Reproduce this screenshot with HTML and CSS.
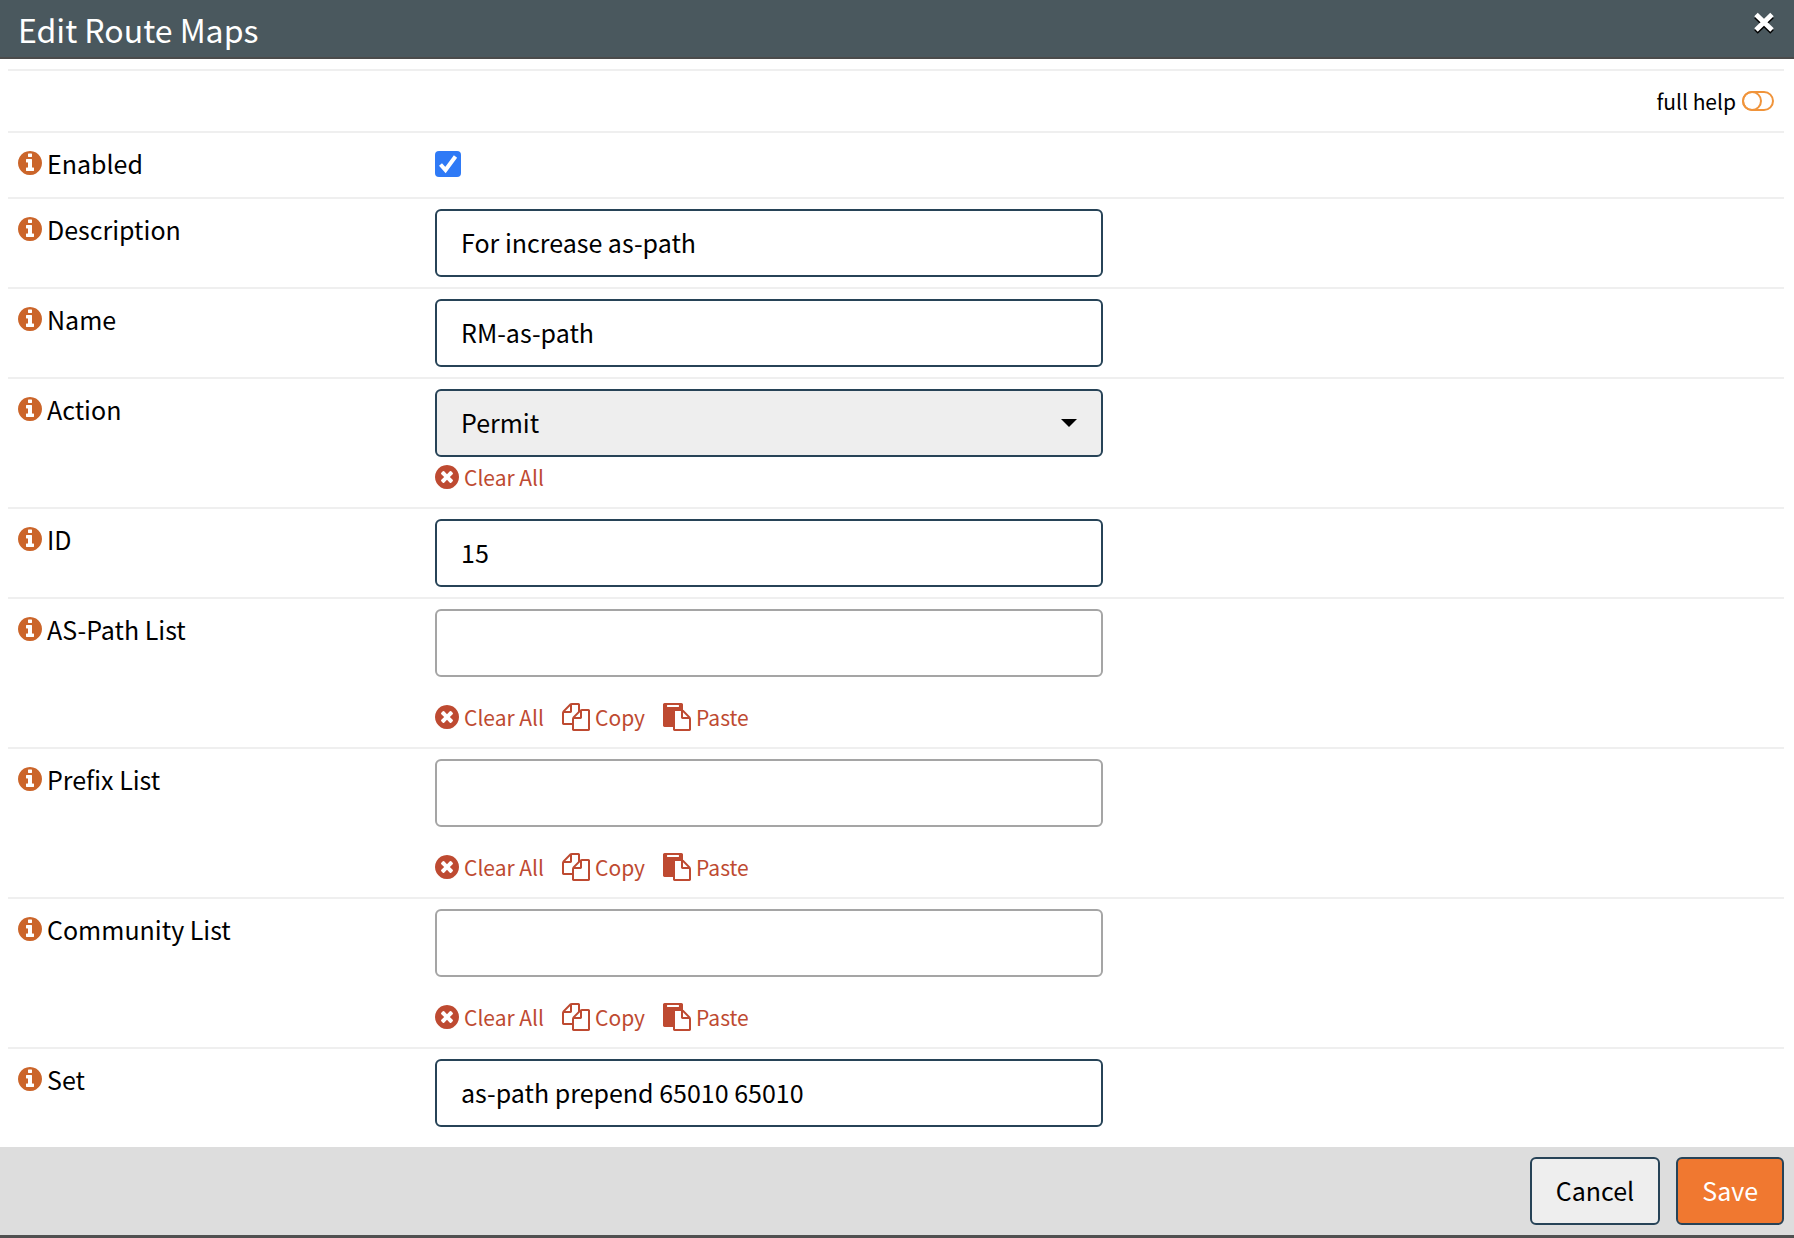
FILE: index.html
```html
<!DOCTYPE html>
<html lang="en">
<head>
<meta charset="utf-8">
<title>Edit Route Maps</title>
<link rel="stylesheet" href="styles.css">
</head>
<body>
<svg class="sprite" aria-hidden="true">
  <symbol id="info" viewBox="128 128 1536 1536"><path d="M1152 1376v-160q0-14-9-23t-23-9h-96v-512q0-14-9-23t-23-9h-320q-14 0-23 9t-9 23v160q0 14 9 23t23 9h96v320h-96q-14 0-23 9t-9 23v160q0 14 9 23t23 9h448q14 0 23-9t9-23zm-128-896v-160q0-14-9-23t-23-9h-192q-14 0-23 9t-9 23v160q0 14 9 23t23 9h192q14 0 23-9t9-23zm640 416q0 209-103 385.5t-279.5 279.5-385.5 103-385.5-103-279.5-279.5-103-385.5 103-385.5 279.5-279.5 385.5-103 385.5 103 279.5 279.5 103 385.5z"/></symbol>
  <symbol id="clear" viewBox="128 128 1536 1536"><path d="M1277 1122q0-26-19-45l-181-181 181-181q19-19 19-45 0-27-19-46l-90-90q-19-19-46-19-26 0-45 19l-181 181-181-181q-19-19-45-19-27 0-46 19l-90 90q-19 19-19 46 0 26 19 45l181 181-181 181q-19 19-19 45 0 27 19 46l90 90q19 19 46 19 26 0 45-19l181-181 181 181q19 19 45 19 27 0 46-19l90-90q19-19 19-46zm387-226q0 209-103 385.5t-279.5 279.5-385.5 103-385.5-103-279.5-279.5-103-385.5 103-385.5 279.5-279.5 385.5-103 385.5 103 279.5 279.5 103 385.5z"/></symbol>
  <symbol id="copy" viewBox="0 0 1792 1792"><path d="M1696 384q40 0 68 28t28 68v1216q0 40-28 68t-68 28h-960q-40 0-68-28t-28-68v-288h-544q-40 0-68-28t-28-68v-672q0-40 20-88t48-76l408-408q28-28 76-48t88-20h416q40 0 68 28t28 68v328q68-40 128-40h416zm-544 213l-299 299h299v-299zm-640-384l-299 299h299v-299zm196 647l316-316v-416h-384v416q0 40-28 68t-68 28h-416v640h512v-256q0-40 20-88t48-76zm956 804v-1152h-384v416q0 40-28 68t-68 28h-416v640h896z"/></symbol>
  <symbol id="paste" viewBox="0 0 1792 1792"><path d="M768 1664h896v-640h-416q-40 0-68-28t-28-68v-416h-384v1152zm256-1440v-64q0-13-9.5-22.5t-22.5-9.5h-704q-13 0-22.5 9.5t-9.5 22.5v64q0 13 9.5 22.5t22.5 9.5h704q13 0 22.5-9.5t9.5-22.5zm256 672h299l-299-299v299zm512 128v672q0 40-28 68t-68 28h-960q-40 0-68-28t-28-68v-160h-544q-40 0-68-28t-28-68v-1344q0-40 28-68t68-28h1088q40 0 68 28t28 68v328q21 13 36 28l408 408q28 28 48 76t20 88z"/></symbol>
</svg>
<form class="dialog">
  <header class="dialog-header">
    <h1 class="title">Edit Route Maps</h1>
    <button class="close" type="button" aria-label="Close">
      <svg width="20" height="22" viewBox="0 0 20 22" fill="none" stroke-width="5"><path stroke="#000" d="M2 4.500l16 15.500M18 4.500L2 20"/><path stroke="#fff" d="M2 2.500l16 15.500M18 2.500L2 18"/></svg>
    </button>
  </header>

  <div class="dialog-body">
    <div class="help">
      <a class="help-link" href="#help">full help
        <svg class="toggle" width="32" height="20" viewBox="0 0 32 20" fill="none" stroke="#f0943b" stroke-width="2"><rect x="1" y="1" width="30" height="18" rx="9"/><circle cx="10" cy="10" r="9"/></svg>
      </a>
    </div>

    <div class="row">
      <label class="label" for="enabled"><svg class="info"><use href="#info"/></svg>Enabled</label>
      <div class="value"><input class="check" id="enabled" type="checkbox" checked></div>
    </div>

    <div class="row">
      <label class="label" for="description"><svg class="info"><use href="#info"/></svg>Description</label>
      <div class="value"><input class="field" id="description" type="text" value="For increase as-path"></div>
    </div>

    <div class="row">
      <label class="label" for="name"><svg class="info"><use href="#info"/></svg>Name</label>
      <div class="value"><input class="field" id="name" type="text" value="RM-as-path"></div>
    </div>

    <div class="row">
      <label class="label" for="action"><svg class="info"><use href="#info"/></svg>Action</label>
      <div class="value">
        <div class="select">
          <select class="field field-select" id="action"><option>Permit</option><option>Deny</option></select>
          <svg class="caret" width="16" height="8" viewBox="0 0 16 8"><path d="M0 0h16l-8 8z"/></svg>
        </div>
        <div class="links">
          <a class="link" href="#clear"><svg class="icon-clear"><use href="#clear"/></svg>Clear All</a>
        </div>
      </div>
    </div>

    <div class="row">
      <label class="label" for="id"><svg class="info"><use href="#info"/></svg>ID</label>
      <div class="value"><input class="field" id="id" type="text" value="15"></div>
    </div>

    <div class="row">
      <label class="label" for="aspath"><svg class="info"><use href="#info"/></svg>AS-Path List</label>
      <div class="value">
        <input class="field field-tokens" id="aspath" type="text">
        <div class="links">
          <a class="link" href="#clear"><svg class="icon-clear"><use href="#clear"/></svg>Clear All</a>
          <a class="link" href="#copy"><svg class="icon-file"><use href="#copy"/></svg>Copy</a>
          <a class="link" href="#paste"><svg class="icon-file"><use href="#paste"/></svg>Paste</a>
        </div>
      </div>
    </div>

    <div class="row">
      <label class="label" for="prefix"><svg class="info"><use href="#info"/></svg>Prefix List</label>
      <div class="value">
        <input class="field field-tokens" id="prefix" type="text">
        <div class="links">
          <a class="link" href="#clear"><svg class="icon-clear"><use href="#clear"/></svg>Clear All</a>
          <a class="link" href="#copy"><svg class="icon-file"><use href="#copy"/></svg>Copy</a>
          <a class="link" href="#paste"><svg class="icon-file"><use href="#paste"/></svg>Paste</a>
        </div>
      </div>
    </div>

    <div class="row">
      <label class="label" for="community"><svg class="info"><use href="#info"/></svg>Community List</label>
      <div class="value">
        <input class="field field-tokens" id="community" type="text">
        <div class="links">
          <a class="link" href="#clear"><svg class="icon-clear"><use href="#clear"/></svg>Clear All</a>
          <a class="link" href="#copy"><svg class="icon-file"><use href="#copy"/></svg>Copy</a>
          <a class="link" href="#paste"><svg class="icon-file"><use href="#paste"/></svg>Paste</a>
        </div>
      </div>
    </div>

    <div class="row">
      <label class="label" for="set"><svg class="info"><use href="#info"/></svg>Set</label>
      <div class="value"><input class="field" id="set" type="text" value="as-path prepend 65010 65010"></div>
    </div>
  </div>

  <footer class="dialog-footer">
    <button class="button" type="button">Cancel</button>
    <button class="button button-save" type="submit">Save</button>
  </footer>
</form>
</body>
</html>
```
FILE: styles.css
```css
*,
*::before {
  box-sizing: border-box;
}

body {
  margin: 0;
  min-height: 100vh;
  background: #505050;
  color: #000;
  font-family: "Noto Sans CJK SC", "Noto Sans", sans-serif;
  font-size: 25px;
  line-height: 36px;
}

.sprite {
  display: none;
}

svg {
  display: block;
  flex: none;
}

.dialog {
  background: #fff;
}

/* Header */
.dialog-header {
  display: flex;
  justify-content: space-between;
  align-items: flex-start;
  padding: 7px 20px 6px 18px;
  background: #4a585e;
  border-bottom: 2px solid #4b4b4b;
}

.title {
  margin: 0;
  color: #fff;
  font-size: 32px;
  font-weight: 400;
  line-height: 44px;
}

.close {
  padding: 5px 0;
  border: 0;
  background: none;
}

/* Form rows */
.dialog-body {
  padding: 10px 10px 10px 8px;
}

.help,
.row {
  border-top: 2px solid #efefef;
}

.help {
  display: flex;
  justify-content: flex-end;
  padding: 12px 10px;
}

.help-link {
  display: flex;
  align-items: center;
  gap: 6px;
  color: #000;
  font-size: 21px;
  text-decoration: none;
}

.row {
  display: grid;
  grid-template-columns: 407px minmax(0, 668px);
  gap: 10px;
  min-height: 66px;
  padding: 10px;
}

.label {
  display: flex;
  align-items: center;
  gap: 5px;
  height: 40px;
}

.info {
  width: 24px;
  height: 24px;
  fill: #cb652a;
}

.check {
  appearance: none;
  display: block;
  width: 26px;
  height: 26px;
  margin: 8px 0;
  border-radius: 4px;
  background: #2f7af6;
}

.check:checked {
  background-image: url("data:image/svg+xml,%3Csvg xmlns='http://www.w3.org/2000/svg' viewBox='0 0 26 26'%3E%3Cpath d='M5.500 13.500l5 5.500L20.500 5.500' fill='none' stroke='white' stroke-width='4'/%3E%3C/svg%3E");
}

.field {
  display: block;
  width: 100%;
  height: 68px;
  padding: 0 24px 2px;
  border: 2px solid #274357;
  border-radius: 6px;
  background: #fff;
  color: #000;
  font: inherit;
}

.field-tokens {
  margin-bottom: 20px;
  border-color: #a5a5a5;
}

.select {
  position: relative;
}

.field-select {
  appearance: none;
  background: #eee;
}

.caret {
  position: absolute;
  top: 30px;
  right: 26px;
  pointer-events: none;
}

.links {
  display: flex;
  gap: 18px;
  height: 40px;
}

.link {
  display: flex;
  align-items: center;
  gap: 5px;
  color: #be4a31;
  font-size: 21px;
  text-decoration: none;
}

.icon-clear {
  width: 24px;
  height: 24px;
  fill: currentColor;
}

.icon-file {
  width: 28px;
  height: 28px;
  fill: currentColor;
}

/* Footer */
.dialog-footer {
  display: flex;
  justify-content: flex-end;
  gap: 16px;
  padding: 10px;
  background: #ddd;
}

.button {
  height: 68px;
  padding: 0 24px 2px;
  border: 2px solid #274357;
  border-radius: 6px;
  background: #eee;
  color: #000;
  font: inherit;
}

.button-save {
  background: #f07830;
  color: #fff;
}
```
